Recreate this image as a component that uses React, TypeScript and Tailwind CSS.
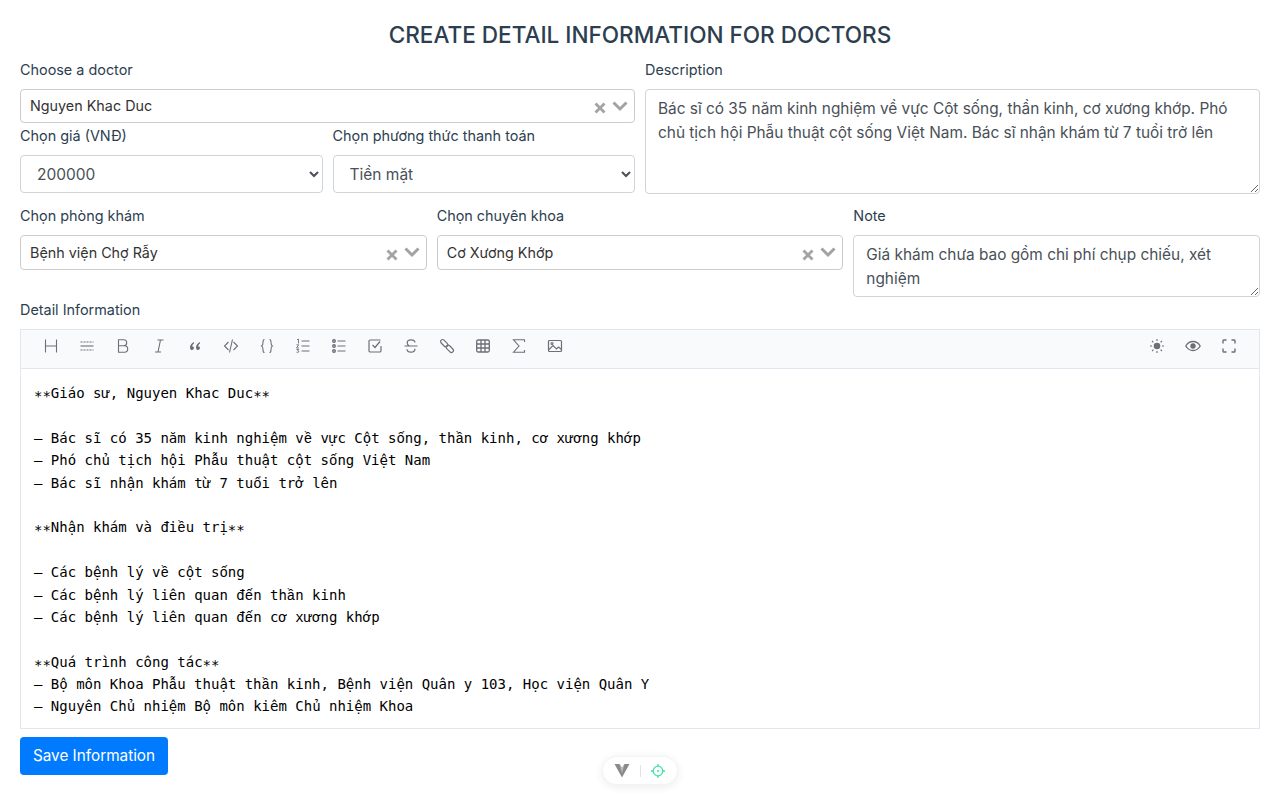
const editorLines = [
  '**Giáo sư, Nguyen Khac Duc**',
  '',
  '– Bác sĩ có 35 năm kinh nghiệm về vực Cột sống, thần kinh, cơ xương khớp',
  '– Phó chủ tịch hội Phẫu thuật cột sống Việt Nam',
  '– Bác sĩ nhận khám từ 7 tuổi trở lên',
  '',
  '**Nhận khám và điều trị**',
  '',
  '– Các bệnh lý về cột sống',
  '– Các bệnh lý liên quan đến thần kinh',
  '– Các bệnh lý liên quan đến cơ xương khớp',
  '',
  '**Quá trình công tác**',
  '– Bộ môn Khoa Phẫu thuật thần kinh, Bệnh viện Quân y 103, Học viện Quân Y',
  '– Nguyên Chủ nhiệm Bộ môn kiêm Chủ nhiệm Khoa',
];

// DejaVu Mono has no stacked marks for these, so they come from Liberation Mono
function MonoLine({ text }: { text: string }) {
  const parts = text.split(/(\*+|[ấầẩẫắằẳẵếềểễốồổỗ])/);
  return (
    <div className="h-[22.4px] whitespace-pre">
      {parts.map((part, i) => {
        if (part.startsWith('*')) {
          return (
            <span key={i} className="inline-block translate-y-[3px]">
              {part}
            </span>
          );
        }
        if (i % 2 === 1) {
          return (
            <span key={i} className="[font-family:'Liberation_Mono',monospace]">
              {part}
            </span>
          );
        }
        return part;
      })}
    </div>
  );
}

function Icon({ children }: { children: React.ReactNode }) {
  return (
    <span className="flex w-9 h-8 items-center justify-center">
      <svg width="16" height="16" viewBox="0 0 16 16" fill="none" stroke="#6b6f76" strokeWidth="1.1">
        {children}
      </svg>
    </span>
  );
}

const leftTools = [
  <path key="h" d="M2.500 1.500v13M13.500 1.500v13M2.500 8h11" />,
  <g key="hr">
    <path d="M1.500 4h13M1.500 12h13" strokeDasharray="2 1" />
    <path d="M1.500 8h13" />
  </g>,
  <path key="b" d="M3.500 1.800h5.200a3 3 0 0 1 0 6H3.500zM3.500 7.800h6a3.200 3.200 0 0 1 0 6.400h-6z" />,
  <path key="i" d="M6.500 2h6M4 14h6M9.500 2l-2.500 12" />,
  <path key="q" fill="#6b6f76" stroke="none" d="M7 4C4.800 5 3 6.900 3 9.400 3 10.900 3.800 12 5 12c1.100 0 2-.8 2-1.900C7 9 6.200 8.200 5.200 8.200c0-1.300.9-2.200 1.800-2.800zM13 4C10.800 5 9 6.900 9 9.400 9 10.900 9.800 12 11 12c1.100 0 2-.8 2-1.900 0-1.100-.8-1.900-1.800-1.900 0-1.300.9-2.200 1.800-2.800z" />,
  <path key="c" d="M5.500 4 1.500 8l4 4M10.500 4l4 4-4 4M9.500 1.500 6.500 14.500" />,
  <path key="br" d="M5.500 1.500C4 1.500 4 2.700 4 4.300S4 7.400 2.700 8C4 8.600 4 10.100 4 11.700s0 2.800 1.500 2.800M10.500 1.500c1.500 0 1.500 1.200 1.500 2.800s0 3.100 1.300 3.700C12 8.600 12 10.100 12 11.700s0 2.800-1.500 2.800" />,
  <g key="ol">
    <path d="M6.500 3h8M6.500 8h8M6.500 13h8" />
    <path d="M2 1.700l1.500-.5v4.300M1.500 6.800h2.200L1.500 10h2.500M1.500 11.500h2.200l-1 1.300c1 0 1.300.6 1 1.200-.3.500-1.500.5-2.200.2" strokeWidth="0.9" />
  </g>,
  <g key="ul">
    <path d="M6.500 3h8M6.500 8h8M6.500 13h8" />
    <circle cx="3" cy="3" r="1.400" fill="#a9acb0" />
    <circle cx="3" cy="8" r="1.400" fill="#a9acb0" />
    <circle cx="3" cy="13" r="1.400" fill="#a9acb0" />
  </g>,
  <g key="chk">
    <path d="M14 8v4.700a1.300 1.300 0 0 1-1.300 1.300H3.300A1.300 1.300 0 0 1 2 12.700V3.300A1.300 1.300 0 0 1 3.300 2H13.500" strokeWidth="1.200" />
    <path d="M5.500 7 8 9.500l5-6" strokeWidth="1.300" />
  </g>,
  <path key="s" d="M1.500 8h13M12 4.500C11.800 2.800 10.200 1.800 8 1.800S4.200 3 4.200 4.800c0 1.400.7 2.400 2 3.200M12 10.800c0 2-1.700 3.400-4 3.400s-3.900-1.300-4-3" strokeWidth="1.200" />,
  <g key="l" strokeWidth="1.200">
    <rect x="0.950" y="3.200" width="8.500" height="4" rx="2" transform="rotate(45 5.200 5.200)" />
    <rect x="6.550" y="8.800" width="8.500" height="4" rx="2" transform="rotate(45 10.800 10.800)" />
  </g>,
  <g key="t">
    <rect x="1.700" y="2" width="12.600" height="12" rx="1.500" strokeWidth="1.300" />
    <path d="M1.700 6h12.600M1.700 10h12.600M6 2v12M10 2v12" strokeWidth="1.300" />
  </g>,
  <path key="sum" d="M13.500 4V1.800H2.500L8 8l-5.500 6.200h11V12" />,
  <g key="img">
    <rect x="1.500" y="2.500" width="13" height="11" rx="1" strokeWidth="1.200" />
    <path d="M2 11.500 6 7.500l3.500 3.500 2-2 3 2.500" />
    <circle cx="5" cy="5.500" r="1" />
  </g>,
];

const rightTools = [
  <g key="sun">
    <circle cx="8" cy="8" r="3.300" fill="#6b6f76" stroke="none" />
    <path d="M8 1v2M8 13v2M1 8h2M13 8h2M3 3l1.400 1.400M11.600 11.600 13 13M3 13l1.400-1.400M11.600 4.400 13 3" />
  </g>,
  <g key="eye">
    <path d="M.8 8C2.500 5 5 3.500 8 3.500S13.500 5 15.200 8c-1.700 3-4.200 4.500-7.200 4.500S2.500 11 .8 8z" strokeWidth="1.300" />
    <circle cx="8" cy="8" r="2.700" fill="#6b6f76" stroke="none" />
  </g>,
  <path key="fs" d="M2 5.500V2.800a.8.8 0 0 1 .8-.8h2.700M10.500 2h2.700a.8.8 0 0 1 .8.8v2.700M14 10.500v2.700a.8.8 0 0 1-.8.8h-2.700M5.500 14H2.800a.8.8 0 0 1-.8-.8v-2.700" strokeWidth="1.400" />,
];

function Clearable({ value, short }: { value: string; short?: boolean }) {
  return (
    <div className="flex h-full items-center rounded border border-[#cccccc] bg-white pl-[9px] pr-[5px] text-[14.35px] text-[#333333]">
      <span className={short ? 'flex-1 pb-px' : 'flex-1'}>{value}</span>
      <svg width="14" height="14" viewBox="0 0 14 14" className="mr-1 mt-1" stroke="#a3a3a3" strokeWidth="2.800">
        <path d="M2.500 2.500l9 9M11.500 2.500l-9 9" />
      </svg>
      <svg width="18" height="12" viewBox="0 0 18 12" fill="none" stroke="#a3a3a3" strokeWidth="3" className="mb-px">
        <path d="M2.500 2.500 9 9l6.500-6.500" />
      </svg>
    </div>
  );
}

function Label({ children }: { children: React.ReactNode }) {
  return <label className="block h-6 mb-2 pt-px text-[14.4px] leading-6 text-[#2c3e50]">{children}</label>;
}

export default function App() {
  return (
    <div className="min-h-[796px] bg-white px-5 pt-5 [font-family:Inter,sans-serif] text-[#2c3e50]">
      <h2 className="h-[29px] mb-2 text-center text-[22.56px] leading-[29px] font-medium">
        CREATE DETAIL INFORMATION FOR DOCTORS
      </h2>

      <div className="grid grid-cols-2 gap-[10px]">
        <div>
          <Label>Choose a doctor</Label>
          <div className="h-[34px]">
            <Clearable value="Nguyen Khac Duc" short />
          </div>
          <div className="grid grid-cols-2 gap-[10px]">
            <div>
              <Label>Chọn giá (VNĐ)</Label>
              <select className="h-[38px] w-full rounded border border-[#ced4da] bg-white px-3 text-[15.5px] text-[#495057]">
                <option>200000</option>
              </select>
            </div>
            <div>
              <Label>Chọn phương thức thanh toán</Label>
              <select className="h-[38px] w-full rounded border border-[#ced4da] bg-white px-3 text-[15.5px] text-[#495057]">
                <option>Tiền mặt</option>
              </select>
            </div>
          </div>
        </div>
        <div>
          <Label>Description</Label>
          <textarea
            readOnly
            className="block h-[105px] w-full rounded border border-[#ced4da] px-3 py-[7px] text-[15.4px] leading-6 text-[#495057]"
            value="Bác sĩ có 35 năm kinh nghiệm về vực Cột sống, thần kinh, cơ xương khớp. Phó chủ tịch hội Phẫu thuật cột sống Việt Nam. Bác sĩ nhận khám từ 7 tuổi trở lên"
          />
        </div>
      </div>

      <div className="mt-[9px] grid grid-cols-3 gap-[10px]">
        <div>
          <Label>Chọn phòng khám</Label>
          <div className="h-[35px]">
            <Clearable value="Bệnh viện Chợ Rẫy" />
          </div>
        </div>
        <div>
          <Label>Chọn chuyên khoa</Label>
          <div className="h-[35px]">
            <Clearable value="Cơ Xương Khớp" />
          </div>
        </div>
        <div>
          <Label>Note</Label>
          <textarea
            readOnly
            className="block h-[62px] w-full rounded border border-[#ced4da] px-3 py-[7px] text-[15.4px] leading-6 text-[#495057]"
            value="Giá khám chưa bao gồm chi phí chụp chiếu, xét nghiệm"
          />
        </div>
      </div>

      <div>
        <Label>Detail Information</Label>
        <div className="h-[400px] overflow-hidden border border-[#e4e6ef] bg-white">
          <div className="flex h-[39px] items-start justify-between border-b border-[#e4e6ef] bg-[#f9fafc] px-3">
            <div className="flex">
              {leftTools.map((tool, i) => (
                <Icon key={i}>{tool}</Icon>
              ))}
            </div>
            <div className="flex">
              {rightTools.map((tool, i) => (
                <Icon key={i}>{tool}</Icon>
              ))}
            </div>
          </div>
          <div className="pl-[13px] pt-[13px] [font-family:'DejaVu_Sans_Mono',monospace] text-[14px] leading-[22.4px] text-black">
            {editorLines.map((line, i) => (
              <MonoLine key={i} text={line} />
            ))}
          </div>
        </div>
      </div>

      <button className="mt-2 h-[38px] w-[148px] rounded bg-[#007bff] pt-px text-[15.3px] text-white">Save Information</button>

      {/* dev tools pill */}
      <div className="fixed bottom-[11px] left-[602px] flex h-[29px] w-[76px] items-center justify-center gap-[10px] rounded-full border border-[#f3f3f3] bg-white shadow-[0_2px_10px_rgba(0,0,0,0.08)]">
        <svg width="16" height="15" viewBox="0 0 16 15">
          <path d="M.5 1h5L8 5l2.500-4h5L8 14.500z" fill="#8a8a8a" />
          <path d="M5.500 1 8 5l2.500-4L8 10z" fill="#bdbdbd" />
        </svg>
        <span className="h-3 w-px bg-[#e2e2e2]" />
        <svg width="16" height="16" viewBox="0 0 16 16" fill="none" stroke="#3ee6a3" strokeWidth="1.300" className="-ml-px">
          <circle cx="8" cy="8" r="4.800" />
          <circle cx="8" cy="8" r="1" fill="#3ee6a3" stroke="none" />
          <path d="M8 1v2.200M8 12.800V15M1 8h2.200M12.800 8H15" />
        </svg>
      </div>
    </div>
  );
}
